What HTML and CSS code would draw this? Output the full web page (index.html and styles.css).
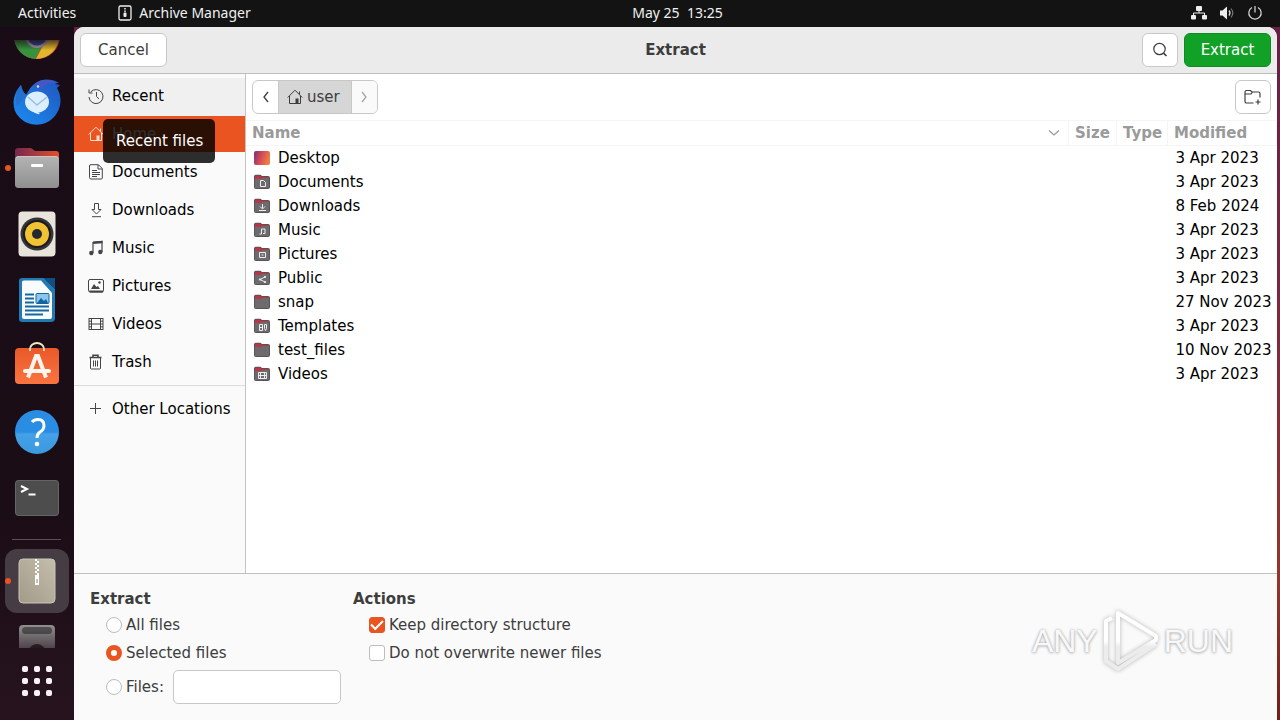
FILE: index.html
```html
<!DOCTYPE html>
<html lang="en">
<head>
<meta charset="utf-8">
<title>Extract</title>
<link rel="stylesheet" href="styles.css">
</head>
<body>
<svg class="defs" aria-hidden="true">
  <defs>
    <linearGradient id="desk" x1="0" x2="1" y1="0" y2="0.3"><stop offset="0" stop-color="#7a2f78"/><stop offset=".5" stop-color="#d04a55"/><stop offset="1" stop-color="#f07a45"/></linearGradient>
    <linearGradient id="filesTop" x1="0" x2="1"><stop offset="0" stop-color="#74284f"/><stop offset="1" stop-color="#e2502d"/></linearGradient>
    <linearGradient id="grey" x1="0" x2="0" y1="0" y2="1"><stop offset="0" stop-color="#b4b4b4"/><stop offset="1" stop-color="#8f8f8f"/></linearGradient>
    <linearGradient id="bird" x1="0" x2="1" y1="1" y2="0"><stop offset="0" stop-color="#1c8cf0"/><stop offset="1" stop-color="#1f56c0"/></linearGradient>
    <linearGradient id="help" x1="0" x2="0" y1="0" y2="1"><stop offset="0" stop-color="#2a8de4"/><stop offset=".5" stop-color="#2a8de4"/><stop offset=".55" stop-color="#45a1e8"/><stop offset="1" stop-color="#3b99e0"/></linearGradient>
    <linearGradient id="bag" x1="0" x2="0" y1="0" y2="1"><stop offset="0" stop-color="#e9592a"/><stop offset="1" stop-color="#fa7440"/></linearGradient>
    <linearGradient id="zip" x1="0" x2="1" y1="1" y2="0"><stop offset="0" stop-color="#a39a88"/><stop offset="1" stop-color="#c4bead"/></linearGradient>
    <linearGradient id="play" x1="0" x2="0" y1="0" y2="1"><stop offset="0" stop-color="#fff"/><stop offset=".5" stop-color="#fff"/><stop offset=".6" stop-color="#ececec"/><stop offset="1" stop-color="#ececec"/></linearGradient>
    <symbol id="folder" viewBox="0 0 16 16"><path d="M0 2.500A1.800 1.800 0 0 1 2 .8h4.500L8 2h6a2 2 0 0 1 2 2v9a2 2 0 0 1-2 2H2a2 2 0 0 1-2-2z" fill="#575457"/><path d="M1 2.500Q1 1.800 2 1.800h4L7.500 3H14q1 0 1 1H8L6.500 5H1z" fill="#bd3442"/><path d="M1 5h5.500L8 4h7v9a1 1 0 0 1-1 1H2a1 1 0 0 1-1-1z" fill="#6e6b6e"/></symbol>
    <symbol id="home" viewBox="0 0 16 16"><path d="M.7 8.500 8 1.200l7.300 7.300M2.500 7v7.500h11V7M12.500 5.500V2.500" fill="none" stroke="currentColor"/><path d="M8.500 9.500h3v5h-3z" fill="currentColor"/></symbol>
  </defs>
</svg>

<header class="topbar">
  <div class="topbar-left">
    <button class="top-btn">Activities</button>
    <button class="top-btn app-name">
      <svg width="14" height="18" viewBox="0 0 14 18"><rect x="1" y="2" width="12" height="14" rx="1.500" fill="none" stroke="#eee" stroke-width="1.300"/><path d="M7 4v4" stroke="#eee" stroke-width="1.500" stroke-dasharray="1.500 1"/><rect x="5.500" y="8.500" width="3" height="4.500" rx="1" fill="#eee"/></svg>
      Archive Manager
    </button>
  </div>
  <button class="top-btn clock">May 25&nbsp; 13:25</button>
  <div class="tray">
    <svg width="16" height="16" viewBox="0 0 16 16" fill="#eee"><rect x="5" y="1" width="6" height="5" rx="1"/><rect x="0" y="10" width="5" height="4.500" rx="1"/><rect x="11" y="10" width="5" height="4.500" rx="1"/><path d="M8 6v2M2.500 10V8h11v2" fill="none" stroke="#eee"/></svg>
    <svg width="16" height="16" viewBox="0 0 16 16"><path d="M1 5.500h2.500L8 1.500v13l-4.500-4H1z" fill="#eee"/><path d="M10 5.500q2 2.500 0 5" fill="none" stroke="#ddd" stroke-width="1.300"/><path d="M12 3.500q3.500 4.500 0 9" fill="none" stroke="#777" stroke-width="1.200"/></svg>
    <svg width="16" height="16" viewBox="0 0 16 16" fill="none" stroke="#ddd" stroke-width="1.200"><path d="M5 2.500a6.200 6.200 0 1 0 6 0M8 1v6.500"/></svg>
  </div>
</header>

<div class="desktop">
  <nav class="dock" aria-label="Dock">
    <div class="dock-list">
      <button class="dock-item clip-top" aria-label="Chrome"><svg width="48" height="48" viewBox="0 0 48 48"><circle cx="24" cy="24" r="23" fill="#e04434"/><path d="M24 24 4 12.500A23 23 0 0 0 22 47l9-16z" fill="#37913d"/><path d="M24 24h22A23 23 0 0 1 23 47l9-17z" fill="#dfb62c"/><circle cx="24" cy="24" r="12" fill="#9d9aae"/><circle cx="24" cy="24" r="9.500" fill="#2d4587"/></svg></button>
      <button class="dock-item" aria-label="Thunderbird"><svg width="48" height="48" viewBox="0 0 48 48"><path d="M8 7C-1 16-2 31 6 39c9 10 25 10 34 1 8-8 10-20 4-30l3-3-5-1c1-1 3-1 4-1C37-1 26 1 20 7c-4 4-5 7-7 10Q9 13 8 7z" fill="url(#bird)"/><path d="M20 8C26 0 36 1 46 5c-7-1-13 1-17 5 4 1 9 5 10 10C34 12 28 9 20 8z" fill="#4457c4"/><path d="M8 7c-5 6-6 14-4 21l9-11Q9 13 8 7z" fill="#2370cf"/><ellipse cx="24" cy="24" rx="12" ry="10.500" fill="#dcefff"/><path d="m15 19 9 8 10-8" fill="none" stroke="#9dbfdd" stroke-width="1.500"/><path d="M17 31q6 6 10 5-3-2-3-4z" fill="#dcefff"/><circle cx="25" cy="8.500" r="1.200" fill="#cce6ff"/></svg></button>
      <button class="dock-item running" aria-label="Files"><svg width="48" height="48" viewBox="0 0 48 48"><path d="M2 7a3 3 0 0 1 3-3h13l4 3h21a3 3 0 0 1 3 3v8H2z" fill="url(#filesTop)"/><rect x="2" y="12" width="44" height="32" rx="3.500" fill="url(#grey)"/><path d="M3 14q1-1.500 3-1.500h36q2 0 3 1.500" fill="none" stroke="#d2c5c2"/><rect x="18" y="20" width="12" height="3" rx="1" fill="#fff"/></svg></button>
      <button class="dock-item" aria-label="Rhythmbox"><svg width="48" height="48" viewBox="0 0 48 48"><rect x="5.500" y="1.500" width="37" height="45" rx="4" fill="#e9e4db"/><circle cx="24" cy="24" r="16.500" fill="#34343b"/><circle cx="24" cy="24" r="14" fill="#1b1b1e"/><circle cx="24" cy="24" r="12" fill="#f1c233"/><circle cx="24" cy="24" r="5" fill="#232831"/></svg></button>
      <button class="dock-item" aria-label="LibreOffice Writer"><svg width="48" height="48" viewBox="0 0 48 48"><path d="M9 2h22l11 11v29a4 4 0 0 1-4 4H9a3 3 0 0 1-3-3V5a3 3 0 0 1 3-3z" fill="#227ab2"/><path d="M9 6q0-1.500 2-1.500h17L39 17v24q0 2-2 2H11q-2 0-2-2z" fill="#f8fcff"/><path d="M31 2h11v11z" fill="#104f83"/><path d="M12 18.500h9M12 22.500h9M12 26.500h9M12 30.500h24M12 34.500h24M12 38.500h18" stroke="#1569a0" stroke-width="1.800"/><rect x="23" y="17.500" width="13" height="10" rx="1" fill="#8bc6ec" stroke="#12659e"/><path d="m24 27 4-5 3 3 2-2 2 4z" fill="#12659e"/></svg></button>
      <button class="dock-item" aria-label="Ubuntu Software"><svg width="48" height="48" viewBox="0 0 48 48"><rect x="2" y="6" width="44" height="36" rx="4" fill="url(#bag)"/><path d="M17 9V7a7 6 0 0 1 14 0v2" fill="none" stroke="#f8e5c5" stroke-width="1.800"/><path d="M15 35.500 23 14h2l8 21.500" fill="none" stroke="#fff5ed" stroke-width="4"/><path d="M12 29h24" stroke="#fff5ed" stroke-width="4" stroke-linecap="round"/></svg></button>
      <button class="dock-item" aria-label="Help"><svg width="48" height="48" viewBox="0 0 48 48"><circle cx="24" cy="24" r="22" fill="url(#help)"/><path d="M19 14q2-2.500 6-2.500 6 0 6 6 0 4-4 6.500-3 2-3 6" fill="none" stroke="#fff" stroke-width="3"/><circle cx="24" cy="36" r="2.300" fill="#fff"/></svg></button>
      <button class="dock-item" aria-label="Terminal"><svg width="48" height="48" viewBox="0 0 48 48"><rect x="2" y="6" width="44" height="36" rx="4" fill="#656565"/><rect x="3" y="7" width="42" height="34" rx="3" fill="#4d4d4d"/><path d="m8 12 6 3-6 3M15.500 20.500h7" fill="none" stroke="#fff" stroke-width="2"/></svg></button>
      <div class="dock-sep"></div>
      <button class="dock-item running active" aria-label="Archive Manager"><svg width="48" height="48" viewBox="0 0 48 48"><rect x="6" y="2" width="36" height="44" rx="4" fill="url(#zip)" stroke="#cbc5b8"/><path d="M23 2v16" stroke="#fff" stroke-width="2" stroke-dasharray="2 2"/><path d="M25 4v16" stroke="#fff" stroke-width="2" stroke-dasharray="2 2"/><rect x="22" y="18" width="4" height="10" fill="#fff"/><path d="M24 22v4" stroke="#8d8678" stroke-width="1"/></svg></button>
      <button class="dock-item clip-bottom" aria-label="Drive"><svg width="48" height="48" viewBox="0 0 48 48"><rect x="6" y="1" width="36" height="46" rx="4" fill="#929090"/><rect x="9" y="3" width="30" height="7" rx="3.500" fill="#555"/><circle cx="24" cy="29" r="9" fill="#292629"/></svg></button>
    </div>
    <button class="show-apps" aria-label="Show Applications"><svg width="30" height="30" viewBox="0 0 30 30" fill="#fbf3fa"><rect width="6" height="6" rx="2"/><rect x="12" width="6" height="6" rx="2"/><rect x="24" width="6" height="6" rx="2"/><rect y="12" width="6" height="6" rx="2"/><rect x="12" y="12" width="6" height="6" rx="2"/><rect x="24" y="12" width="6" height="6" rx="2"/><rect y="24" width="6" height="6" rx="2"/><rect x="12" y="24" width="6" height="6" rx="2"/><rect x="24" y="24" width="6" height="6" rx="2"/></svg></button>
  </nav>

  <main class="window">
    <header class="headerbar">
      <button class="btn cancel">Cancel</button>
      <h1 class="title">Extract</h1>
      <div class="header-end">
        <button class="btn icon-btn" aria-label="Search"><svg width="16" height="16" viewBox="0 0 16 16" fill="none" stroke="#3d3d3d" stroke-width="1.200"><circle cx="7.500" cy="7" r="5.700"/><path d="m11.500 11.200 3 2.800" stroke-width="1.600"/></svg></button>
        <button class="btn suggested">Extract</button>
      </div>
    </header>

    <div class="browser">
      <aside class="sidebar">
        <ul class="places">
          <li class="recent"><button class="place"><svg width="16" height="16" viewBox="0 0 16 16" fill="none" stroke="currentColor"><path d="M2.700 4A7 7 0 1 1 1 9M1 1.500V5h3.500M8.500 4v4.500l2.500 2.500"/></svg>Recent</button><div class="tooltip" role="tooltip">Recent files</div></li>
          <li class="selected"><button class="place"><svg width="16" height="16"><use href="#home"/></svg>Home</button></li>
          <li><button class="place"><svg width="16" height="16" viewBox="0 0 16 16" fill="none" stroke="currentColor"><path d="M3 .7h7.500L14.300 4.500V14a1 1 0 0 1-1 1H3a1.500 1.500 0 0 1-1.500-1.500V2A1.300 1.300 0 0 1 3 .7zM10 1v4h4M4 6.500h5M4 8.500h8M4 10.500h8M4 12.500h5"/></svg>Documents</button></li>
          <li><button class="place"><svg width="16" height="16" viewBox="0 0 16 16" fill="none" stroke="currentColor"><path d="M6.500 1.500h4v6H13L8.500 12 4 7.500h2.500zM4 14.700h9"/></svg>Downloads</button></li>
          <li><button class="place"><svg width="16" height="16" viewBox="0 0 16 16"><path d="M5 13V2.500l9-1V12" fill="none" stroke="currentColor" stroke-width="1.200"/><path d="M5 1.500 14.500.7v2.500L5 4z" fill="currentColor"/><circle cx="3.300" cy="13" r="2.200" fill="currentColor"/><circle cx="12.300" cy="12" r="2.200" fill="currentColor"/></svg>Music</button></li>
          <li><button class="place"><svg width="16" height="16" viewBox="0 0 16 16"><rect x=".5" y="1.500" width="15" height="12.500" rx="1.500" fill="none" stroke="currentColor"/><path d="M1 12.500h14v2H2zM3 11l3-5 2.500 3L10 8l2 3z" fill="currentColor"/><circle cx="11.500" cy="4.500" r="1.200" fill="currentColor"/></svg>Pictures</button></li>
          <li><button class="place"><svg width="16" height="16" viewBox="0 0 16 16" fill="none" stroke="currentColor"><path d="M3.500 2v12M12.500 2v12M3.500 2.500h9M3.500 8h9M3.500 13.500h9"/><path d="M1 2v12M15 2v12"/><path d="M1 2.500h2M1 5.200h2M1 8h2M1 10.800h2M1 13.500h2M13 2.500h2M13 5.200h2M13 8h2M13 10.800h2M13 13.500h2"/></svg>Videos</button></li>
          <li><button class="place"><svg width="16" height="16" viewBox="0 0 16 16" fill="none" stroke="currentColor"><path d="M1.500 3.500h12M5 3V1.200h5V3" stroke-width="1.600"/><path d="M2.500 4v10a1 1 0 0 0 1 1h8a1 1 0 0 0 1-1V4M5.500 6.500v6M7.500 6.500v6M9.500 6.500v6"/></svg>Trash</button></li>
          <li class="other"><button class="place"><svg width="16" height="16" viewBox="0 0 16 16" stroke="currentColor"><path d="M2 7.500h11M7.500 2v11"/></svg>Other Locations</button></li>
        </ul>
      </aside>

      <section class="files">
        <div class="pathrow">
          <div class="pathbar">
            <button class="path-arrow" aria-label="Back"><svg width="8" height="12" viewBox="0 0 8 12" fill="none" stroke="#3d3d3d" stroke-width="1.300"><path d="M6 1 2 6l4 5"/></svg></button>
            <button class="path-user"><svg width="16" height="16"><use href="#home"/></svg>user</button>
            <button class="path-arrow" aria-label="Forward" disabled><svg width="8" height="12" viewBox="0 0 8 12" fill="none" stroke="#a5a5a5" stroke-width="1.300"><path d="m2 1 4 5-4 5"/></svg></button>
          </div>
          <button class="btn icon-btn" aria-label="Create Folder"><svg width="18" height="16" viewBox="0 0 18 16" fill="none" stroke="#3d3d3d" stroke-width="1.200"><path d="M9.500 14H2.500A1.500 1.500 0 0 1 1 12.500V3a1.500 1.500 0 0 1 1.500-1.500h4L8 3h6.500A1.500 1.500 0 0 1 16 4.500v4M1 5h6l1.500-2M14 10.500v5M11.500 13h5"/></svg></button>
        </div>
        <table class="filelist">
          <colgroup><col><col class="c-size"><col class="c-type"><col class="c-mod"></colgroup>
          <thead><tr>
            <th><div class="sort">Name<svg width="12" height="8" viewBox="0 0 12 8" fill="none" stroke="#9a9a9a" stroke-width="1.200"><path d="m1 1.500 5 4.500 5-4.500"/></svg></div></th>
            <th>Size</th><th>Type</th><th>Modified</th>
          </tr></thead>
          <tbody>
            <tr><td><div class="file"><svg width="16" height="16" viewBox="0 0 16 16"><rect y="1" width="16" height="14" rx="2" fill="url(#desk)"/></svg>Desktop</div></td><td></td><td></td><td>3 Apr 2023</td></tr>
            <tr><td><div class="file"><svg width="16" height="16" viewBox="0 0 16 16" fill="none" stroke="#eee"><use href="#folder" stroke="none"/><path d="M6.500 6.500h3l2 2v4h-5z"/></svg>Documents</div></td><td></td><td></td><td>3 Apr 2023</td></tr>
            <tr><td><div class="file"><svg width="16" height="16" viewBox="0 0 16 16" fill="none" stroke="#eee"><use href="#folder" stroke="none"/><path d="M8.500 6v4M6 8.500l2.500 2.500L11 8.500M5 12.500h7"/></svg>Downloads</div></td><td></td><td></td><td>8 Feb 2024</td></tr>
            <tr><td><div class="file"><svg width="16" height="16" viewBox="0 0 16 16" fill="none" stroke="#eee"><use href="#folder" stroke="none"/><path d="M7.500 12V7h3.500v4.500M5.500 12h2M9 11.500h2"/></svg>Music</div></td><td></td><td></td><td>3 Apr 2023</td></tr>
            <tr><td><div class="file"><svg width="16" height="16" viewBox="0 0 16 16" fill="none" stroke="#eee"><use href="#folder" stroke="none"/><path d="M5.500 6.500h6v5h-6zM7.500 9h2"/></svg>Pictures</div></td><td></td><td></td><td>3 Apr 2023</td></tr>
            <tr><td><div class="file"><svg width="16" height="16" viewBox="0 0 16 16" fill="#eee" stroke="#eee"><use href="#folder" stroke="none"/><path d="m11 7-5 2.500 5 2.500" fill="none"/><circle cx="11" cy="7" r=".7"/><circle cx="6" cy="9.500" r=".7"/><circle cx="11" cy="12" r=".7"/></svg>Public</div></td><td></td><td></td><td>3 Apr 2023</td></tr>
            <tr><td><div class="file"><svg width="16" height="16"><use href="#folder"/></svg>snap</div></td><td></td><td></td><td>27 Nov 2023</td></tr>
            <tr><td><div class="file"><svg width="16" height="16" viewBox="0 0 16 16" fill="none" stroke="#eee"><use href="#folder" stroke="none"/><path d="M5.500 6.500h3v6h-3zM5.500 9.500h3M10.500 6.500h2v4l-1 2-1-2z"/></svg>Templates</div></td><td></td><td></td><td>3 Apr 2023</td></tr>
            <tr><td><div class="file"><svg width="16" height="16"><use href="#folder"/></svg>test_files</div></td><td></td><td></td><td>10 Nov 2023</td></tr>
            <tr><td><div class="file"><svg width="16" height="16" viewBox="0 0 16 16" fill="none" stroke="#eee"><use href="#folder" stroke="none"/><path d="M4.500 6.500v6M6.500 6.500v6M10.500 6.500v6M12.500 6.500v6M4.500 6.500h8M4.500 9.500h8M4.500 12.500h8"/></svg>Videos</div></td><td></td><td></td><td>3 Apr 2023</td></tr>
          </tbody>
        </table>
      </section>
    </div>

    <form class="options">
      <fieldset class="group group-extract">
        <legend>Extract</legend>
        <div class="opt"><input type="radio" name="what" id="all"><label for="all">All files</label></div>
        <div class="opt"><input type="radio" name="what" id="sel" checked><label for="sel">Selected files</label></div>
        <div class="opt opt-files"><input type="radio" name="what" id="pat"><label for="pat">Files:</label><input class="pattern" type="text" aria-label="Files pattern"></div>
      </fieldset>
      <fieldset class="group">
        <legend>Actions</legend>
        <div class="opt"><input type="checkbox" id="keep" checked><label for="keep">Keep directory structure</label></div>
        <div class="opt"><input type="checkbox" id="newer"><label for="newer">Do not overwrite newer files</label></div>
      </fieldset>
      <div class="watermark">
        <span>ANY</span>
        <svg class="play" width="58" height="64" viewBox="0 0 58 64" fill="none" stroke="url(#play)" stroke-width="4" stroke-linejoin="round"><path d="M16 4 54 27v4L16 54zM10 9 4 12v40l12 8 38-25"/></svg>
        <span>RUN</span>
      </div>
    </form>
  </main>
</div>
</body>
</html>
```
FILE: styles.css
```css
* { box-sizing: border-box; }

html, body { height: 100%; }

body {
  margin: 0;
  display: flex;
  flex-direction: column;
  overflow: hidden;
  background: #131313;
  color: #000;
  font: 15px/20px "DejaVu Sans", sans-serif;
}

button, input { font: inherit; color: inherit; margin: 0; }
button { padding: 0; border: 0; background: none; }
svg { display: block; flex: none; }
.defs { position: absolute; width: 0; height: 0; }

/* Top bar */
.topbar {
  flex: none;
  display: grid;
  grid-template-columns: 1fr auto 1fr;
  align-items: center;
  height: 27px;
  padding: 0 17px 1px 92px;
  color: #f0f0f0;
  font: 14px/20px "Noto Sans", sans-serif;
}
.topbar-left { display: flex; gap: 42px; margin-left: -74px; }
.app-name { display: flex; align-items: center; gap: 7px; }
.tray { display: flex; justify-content: flex-end; gap: 12px; }

/* Desktop */
.desktop {
  flex: 1;
  min-height: 0;
  display: flex;
  padding-right: 3px;
  background: linear-gradient(#651f43, #7b2840 40%, #92362c 80%, #701f1c);
}

.dock {
  flex: none;
  display: flex;
  flex-direction: column;
  width: 74px;
  padding-top: 13px;
  background: linear-gradient(#190c16, #1b0d16 70%, #26131e);
}
.dock-list {
  flex: 1;
  min-height: 0;
  display: flex;
  flex-direction: column;
  overflow: hidden;
}
.dock-item {
  position: relative;
  flex: none;
  display: flex;
  align-items: center;
  justify-content: center;
  height: 66px;
}
.clip-top {
  align-items: flex-end;
  height: 29px;
  padding-bottom: 9px;
  overflow: hidden;
  mask-image: linear-gradient(rgb(0 0 0 / 30%), #000 10px);
}
.clip-bottom {
  flex: 1 1 0;
  align-items: flex-start;
  min-height: 0;
  padding-top: 11px;
  overflow: hidden;
  mask-image: linear-gradient(#000 12px, rgb(0 0 0 / 40%));
}
.dock-sep {
  flex: none;
  height: 1px;
  margin: 8px 13px 9px 12px;
  background: #5b5058;
}
.active {
  height: 64px;
  margin: 0 5px;
  border-radius: 12px;
  background: #463c43;
}
.running::before {
  content: "";
  position: absolute;
  left: 5px;
  top: 50%;
  width: 6px;
  height: 6px;
  margin-top: -3px;
  border-radius: 50%;
  background: #e95420;
}
.active::before { left: 0; }
.show-apps {
  display: flex;
  align-items: center;
  justify-content: center;
  height: 72px;
  padding-bottom: 6px;
}

/* Window */
.window {
  flex: 1;
  min-width: 0;
  display: flex;
  flex-direction: column;
  overflow: hidden;
  border-radius: 10px 10px 0 0;
  background: #fafafa;
}
.headerbar {
  flex: none;
  display: grid;
  grid-template-columns: 1fr auto 1fr;
  align-items: center;
  height: 47px;
  padding: 0 6px;
  border-bottom: 1px solid #bdbdbd;
  background: #ebebeb;
  color: #3d3d3d;
}
.title { margin: 0; font: bold 15px/20px "DejaVu Sans", sans-serif; }
.header-end { display: flex; justify-content: flex-end; gap: 6px; }
.btn {
  display: flex;
  align-items: center;
  justify-content: center;
  height: 34px;
  border: 1px solid #c8c8c8;
  border-radius: 6px;
  background: #fff;
}
.cancel, .suggested { width: 87px; }
.cancel { justify-self: start; }
.icon-btn { width: 36px; }
.suggested { border-color: #128a22; background: #12a127; color: #fff; }

.browser { flex: 1; min-height: 0; display: flex; }

/* Places */
.sidebar { flex: none; width: 172px; border-right: 1px solid #c4c4c4; }
.places {
  display: flex;
  flex-direction: column;
  gap: 2px;
  margin: 0;
  padding: 4px 0 0;
  list-style: none;
}
.place {
  display: flex;
  align-items: center;
  gap: 8px;
  width: 100%;
  height: 36px;
  padding-left: 14px;
  white-space: nowrap;
}
.place svg { color: #454545; }
.recent { position: relative; background: #f0f0f0; box-shadow: 0 2px #f0f0f0; }
.selected { background: #e95420; color: #fff; }
.selected .place svg { color: #ffe0d2; }
.other { margin-top: 3px; padding-top: 5px; border-top: 1px solid #dcdcdc; }
.tooltip {
  position: absolute;
  z-index: 1;
  left: 29px;
  top: 41px;
  padding: 12px 12px 12px 13px;
  border-radius: 5px;
  background: rgb(0 0 0 / 82%);
  color: #fff;
  white-space: nowrap;
}

/* File list */
.files { flex: 1; min-width: 0; background: #fff; }
.pathrow {
  display: flex;
  justify-content: space-between;
  padding: 6px;
}
.pathbar {
  display: flex;
  height: 34px;
  overflow: hidden;
  border: 1px solid #c8c8c8;
  border-radius: 6px;
  color: #3d3d3d;
}
.path-arrow {
  display: flex;
  align-items: center;
  justify-content: center;
  width: 25px;
}
.path-arrow:disabled { background: #fafafa; }
.path-user {
  display: flex;
  align-items: center;
  gap: 4px;
  padding: 0 11px 0 8px;
  border: solid #c8c8c8;
  border-width: 0 1px;
  background: #d6d6d6;
}
.filelist {
  width: 100%;
  table-layout: fixed;
  border-collapse: collapse;
}
.c-size { width: 48px; }
.c-type { width: 51px; }
.c-mod { width: 109px; }
.filelist th {
  height: 25px;
  padding: 0 0 0 6px;
  border: 1px solid #f5f5f5;
  border-width: 1px 1px 1px 0;
  color: #9a9a9a;
  text-align: left;
}
.filelist td {
  height: 24px;
  padding: 0 0 0 8px;
  white-space: nowrap;
}
.sort {
  display: flex;
  align-items: center;
  justify-content: space-between;
  padding-right: 8px;
}
.file { display: flex; align-items: center; gap: 8px; }

/* Extraction options */
.options {
  flex: none;
  display: flex;
  gap: 12px;
  height: 147px;
  padding: 15px 44px 16px 16px;
  border-top: 1px solid #c0c0c0;
  color: #3d3d3d;
}
.group { min-width: 0; margin: 0; padding: 0; border: 0; }
.group-extract { width: 251px; }
.group legend { padding: 0; font-weight: bold; }
.opt {
  display: flex;
  align-items: center;
  gap: 4px;
  height: 28px;
  padding-left: 16px;
  white-space: nowrap;
}
.group .opt:first-of-type { margin-top: 2px; }
.opt-files { height: 34px; margin-top: 3px; }
.opt input[type="radio"], .opt input[type="checkbox"] {
  flex: none;
  appearance: none;
  width: 16px;
  height: 16px;
  border: 1px solid #bdbdbd;
  border-radius: 3px;
  background: #fff;
}
.opt input[type="radio"] { border-radius: 50%; }
.opt input[type="radio"]:checked { border: 5px solid #e95420; }
.opt input[type="checkbox"]:checked {
  display: grid;
  place-items: center;
  border-color: #e95420;
  background: #e95420;
}
.opt input[type="checkbox"]:checked::before {
  content: "";
  width: 10px;
  height: 5px;
  margin-bottom: 3px;
  border: solid #fff;
  border-width: 0 0 2px 2px;
  transform: rotate(-45deg);
}
.opt .pattern {
  flex: 1;
  min-width: 0;
  height: 34px;
  margin-left: 5px;
  padding: 0 8px;
  border: 1px solid #c8c8c8;
  border-radius: 5px;
  background: #fff;
}
.watermark {
  align-self: flex-start;
  display: flex;
  align-items: center;
  gap: 4px;
  margin: 20px 0 0 auto;
  color: #f8f8f8;
  font: 32px/40px "Liberation Sans", sans-serif;
  text-shadow: 0 0 3px #aaa, 0 1px 3px #c4c4c4;
}
.play { filter: drop-shadow(0 0 2px #b4b4b4); }
```
